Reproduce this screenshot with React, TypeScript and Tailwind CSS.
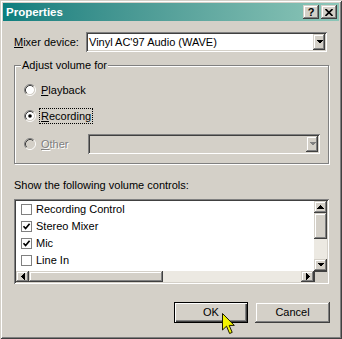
import React from 'react';

const raised =
  'bg-[#d4d0c8] shadow-[inset_-1px_-1px_#404040,inset_1px_1px_#d4d0c8,inset_-2px_-2px_#808080,inset_2px_2px_#ffffff]';
const sunken =
  'shadow-[inset_1px_1px_#808080,inset_-1px_-1px_#ffffff,inset_2px_2px_#404040,inset_-2px_-2px_#d4d0c8]';

const Arrow = ({ dir = 'down', color = '#000' }: { dir?: 'down' | 'up' | 'left' | 'right'; color?: string }) => {
  const pts: Record<string, string> = {
    down: '0,0 7,0 3.5,3.5',
    up: '3.5,0 7,3.5 0,3.5',
    left: '3.5,0 3.5,7 0,3.5',
    right: '0,0 3.5,3.5 0,7',
  };
  const vertical = dir === 'down' || dir === 'up';
  return (
    <svg width={vertical ? 7 : 4} height={vertical ? 4 : 7} viewBox={vertical ? '0 0 7 4' : '0 0 4 7'}>
      <polygon points={pts[dir]} fill={color} shapeRendering="crispEdges" />
    </svg>
  );
};

const Radio = ({ checked = false, disabled = false }: { checked?: boolean; disabled?: boolean }) => (
  <svg width="12" height="12" viewBox="0 0 12 12" className="shrink-0">
    <circle cx="6" cy="6" r="4.2" fill={disabled ? '#d4d0c8' : '#ffffff'} />
    <path d="M2.11 9.89 A5.5 5.5 0 0 1 9.89 2.11" stroke="#808080" fill="none" />
    <path d="M9.89 2.11 A5.5 5.5 0 0 1 2.11 9.89" stroke="#ffffff" fill="none" />
    <path d="M2.82 9.18 A4.5 4.5 0 0 1 9.18 2.82" stroke="#404040" fill="none" />
    <path d="M9.18 2.82 A4.5 4.5 0 0 1 2.82 9.18" stroke="#d4d0c8" fill="none" />
    {checked && <circle cx="6" cy="6" r="1.8" fill="#000" />}
  </svg>
);

const Check = ({ checked }: { checked: boolean }) => (
  <div className="w-[11px] h-[11px] border border-[#808080] bg-white shrink-0 flex items-center justify-center">
    {checked && (
      <svg width="9" height="9" viewBox="0 0 9 9">
        <path d="M1.5 4.2 L3.6 6.5 L7.6 1.8" stroke="#000" strokeWidth="1.7" fill="none" />
      </svg>
    )}
  </div>
);

const items: [string, boolean][] = [
  ['Recording Control', false],
  ['Stereo Mixer', true],
  ['Mic', true],
  ['Line In', false],
];

export default function App() {
  return (
    <div
      className={`relative w-[342px] h-[339px] p-[3px] bg-[#d4d0c8] text-black text-[11px] leading-[13px] font-['Liberation_Sans',Arial,sans-serif] shadow-[inset_1px_1px_#d4d0c8,inset_-1px_-1px_#404040,inset_2px_2px_#ffffff,inset_-2px_-2px_#808080]`}
    >
      {/* title bar */}
      <div className="h-[18px] flex items-center pl-[3px] pr-[2px] bg-gradient-to-r from-[#0a7e7e] to-[#8cc6b8]">
        <span className="flex-1 text-white font-bold text-[11.5px]">Properties</span>
        <div className="flex gap-[2px]">
          <div className={`w-[16px] h-[14px] flex items-center justify-center font-bold text-[11px] leading-none ${raised}`}>
            ?
          </div>
          <div className={`w-[16px] h-[14px] flex items-center justify-center ${raised}`}>
            <svg width="8" height="7" viewBox="0 0 8 7">
              <path d="M0.5 0 L7.5 7 M7.5 0 L0.5 7" stroke="#000" strokeWidth="1.6" />
            </svg>
          </div>
        </div>
      </div>

      <div className="pl-[11px] pr-[10px] flex flex-col">
        {/* mixer device */}
        <div className="mt-[11px] flex items-center">
          <span className="w-[72px]">
            <u>M</u>ixer device:
          </span>
          <div className={`w-[241px] h-[20px] p-[2px] bg-white flex ${sunken}`}>
            <span className="flex-1 pl-[1px] self-center">Vinyl AC'97 Audio (WAVE)</span>
            <div className={`w-[12px] flex items-center justify-center ${raised}`}>
              <Arrow />
            </div>
          </div>
        </div>

        {/* group box */}
        <div className="relative mt-[13px] h-[99px] border border-[#808080] shadow-[1px_1px_0_#ffffff,inset_1px_1px_0_#ffffff] pl-[9px] pt-[16px] flex flex-col gap-[10px]">
          <span className="absolute -top-[7px] left-[6px] px-[1px] bg-[#d4d0c8]">Adjust volume for</span>
          <div className="h-[16px] flex items-center gap-[3px]">
            <Radio />
            <span className="px-[2px]">
              <u>P</u>layback
            </span>
          </div>
          <div className="h-[16px] flex items-center gap-[3px]">
            <Radio checked />
            <span className="px-[1px] h-[16px] leading-[14px] border border-dotted border-black">
              <u>R</u>ecording
            </span>
          </div>
          <div className="h-[20px] flex items-center gap-[3px]">
            <Radio disabled />
            <span className="w-[46px] px-[2px] text-[#808080] [text-shadow:1px_1px_0_#ffffff]">
              <u>O</u>ther
            </span>
            <div className={`w-[232px] h-[20px] p-[2px] bg-[#d4d0c8] flex justify-end ${sunken}`}>
              <div className={`w-[12px] flex items-center justify-center ${raised}`}>
                <Arrow color="#808080" />
              </div>
            </div>
          </div>
        </div>

        <div className="mt-[15px] h-[13px]">Show the following volume controls:</div>

        {/* list box */}
        <div className={`mt-[7px] w-[315px] h-[85px] p-[2px] bg-white flex flex-col ${sunken}`}>
          <div className="flex h-[70px]">
            <div className="flex-1 overflow-hidden">
              {items.map(([label, checked]) => (
                <div key={label} className="h-[17px] pl-[5px] flex items-center gap-[4px]">
                  <Check checked={checked} />
                  <span>{label}</span>
                </div>
              ))}
            </div>
            <div className="w-[13px] flex flex-col">
              <div className={`h-[12px] flex items-center justify-center ${raised}`}>
                <Arrow dir="up" />
              </div>
              <div className={`h-[26px] ${raised}`} />
              <div className="flex-1 bg-[#ece9e2]" />
              <div className={`h-[12px] flex items-center justify-center ${raised}`}>
                <Arrow />
              </div>
            </div>
          </div>
          <div className="flex h-[11px]">
            <div className={`w-[13px] flex items-center justify-center ${raised}`}>
              <Arrow dir="left" />
            </div>
            <div className={`w-[134px] ${raised}`} />
            <div className="flex-1 bg-[#ece9e2]" />
            <div className={`w-[13px] flex items-center justify-center ${raised}`}>
              <Arrow dir="right" />
            </div>
            <div className="w-[13px] bg-[#d4d0c8] border-l border-t border-[#404040]" />
          </div>
        </div>

        {/* buttons */}
        <div className="mt-[18px] -mr-[1px] flex justify-end gap-[7px]">
          <div className="w-[74px] h-[21px] flex items-center justify-center bg-[#d4d0c8] shadow-[inset_0_0_0_1px_#000000,inset_2px_2px_#ffffff,inset_-2px_-2px_#404040,inset_-3px_-3px_#808080]">
            OK
          </div>
          <div className={`w-[75px] h-[21px] flex items-center justify-center ${raised}`}>Cancel</div>
        </div>
      </div>

      {/* mouse cursor */}
      <svg className="absolute left-[222px] top-[313px]" width="14" height="22" viewBox="0 0 14 22">
        <polygon
          points="0.5,0.5 0.5,17 4.5,13.2 7.6,20.5 10.2,19.4 7.2,12.4 12.3,12.4"
          fill="#f2f200"
          stroke="#1a1a00"
          strokeWidth="1"
          strokeLinejoin="miter"
        />
      </svg>
    </div>
  );
}
